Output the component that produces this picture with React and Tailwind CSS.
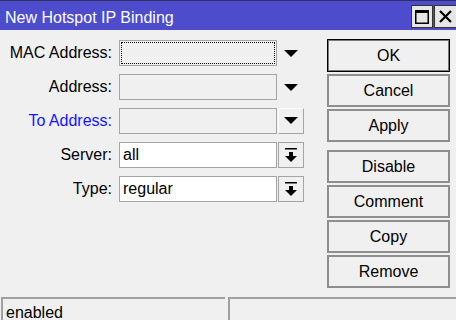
const FIELDS = [
  { label: "MAC Address:", value: "", kind: "plain", focus: true },
  { label: "Address:", value: "", kind: "plain" },
  { label: "To Address:", value: "", kind: "boxed", blue: true },
  { label: "Server:", value: "all", kind: "select", white: true },
  { label: "Type:", value: "regular", kind: "select", white: true },
];

const Arrow = () => (
  <svg width="14" height="8" viewBox="0 0 14 8">
    <path d="M0 0h14L7 7z" fill="#000" />
  </svg>
);

const SelectArrow = () => (
  <svg width="12" height="14" viewBox="0 0 12 14">
    <rect x="0" y="0" width="12" height="1.5" fill="#000" />
    <rect x="4" y="4" width="4" height="4" fill="#000" />
    <path d="M0 8h12L6 14z" fill="#000" />
  </svg>
);

const Field = ({ f }) => (
  <div className="flex items-center h-[26px]">
    <span
      className={`w-[111px] text-right mr-[7px] whitespace-nowrap ${
        f.blue ? "text-[#1515ff]" : "text-black"
      }`}
    >
      {f.label}
    </span>
    <div
      className={`relative w-[158px] h-[26px] border border-[#a5a5a5] flex items-center pl-[3px] ${
        f.white ? "bg-white" : "bg-[#f0f0f0]"
      }`}
    >
      {f.focus && (
        <div className="absolute inset-[1px] border border-dotted border-black"></div>
      )}
      {f.value}
    </div>
    {f.kind === "plain" && (
      <div className="w-[26px] ml-[1px] h-[26px] flex items-center justify-center pt-[1px]">
        <Arrow />
      </div>
    )}
    {f.kind === "boxed" && (
      <div className="w-[26px] ml-[1px] h-[26px] border border-[#a5a5a5] border-t-white border-l-white flex items-center justify-center">
        <Arrow />
      </div>
    )}
    {f.kind === "select" && (
      <div className="w-[26px] ml-[1px] h-[26px] border border-[#a5a5a5] bg-[#f0f0f0] flex items-center justify-center">
        <SelectArrow />
      </div>
    )}
  </div>
);

const Btn = ({ children, primary }) => (
  <button
    className={`w-[123px] h-[33px] bg-[#f0f0f0] text-black text-[16px] ${
      primary
        ? "border border-black shadow-[inset_0_0_0_1px_#7a7a7a]"
        : "border-2 border-[#8e8e8e]"
    }`}
  >
    {children}
  </button>
);

const App = () => {
  return (
    <div className="w-[456px] h-[320px] bg-[#f0f0f0] flex flex-col overflow-hidden font-['Liberation_Sans',Arial,sans-serif] text-[16px] text-black">
      {/* title bar */}
      <div className="h-[30px] border-t border-[#2e2e5e] bg-[#4c4ccc] flex items-center justify-between pl-[5px]">
        <span className="text-white text-[16px] pt-[5px]">New Hotspot IP Binding</span>
        <div className="flex gap-[1px] pt-[2px]">
          <div className="w-[22px] h-[23px] border border-[#333] bg-[#e6e6e6] flex items-center justify-center">
            <svg width="14" height="14" viewBox="0 0 14 14">
              <rect x="0.75" y="0.75" width="12.5" height="12.5" fill="none" stroke="#000" strokeWidth="1.5" />
              <rect x="0" y="0" width="14" height="3" fill="#000" />
            </svg>
          </div>
          <div className="w-[22px] h-[23px] border border-[#333] border-r-0 bg-[#e6e6e6] flex items-center justify-center">
            <svg width="13" height="13" viewBox="0 0 13 13">
              <path d="M1 1l11 11M12 1L1 12" stroke="#000" strokeWidth="2.2" />
            </svg>
          </div>
        </div>
      </div>

      {/* body */}
      <div className="flex-1 flex">
        <div className="flex flex-col gap-[8px] pt-[10px] pl-[1px]">
          {FIELDS.map((f) => (
            <Field key={f.label} f={f} />
          ))}
        </div>
        <div className="flex flex-col pt-[9px] ml-[23px]">
          <div className="flex flex-col gap-[2px]">
            <Btn primary>OK</Btn>
            <Btn>Cancel</Btn>
            <Btn>Apply</Btn>
          </div>
          <div className="flex flex-col gap-[2px] mt-[8px]">
            <Btn>Disable</Btn>
            <Btn>Comment</Btn>
            <Btn>Copy</Btn>
            <Btn>Remove</Btn>
          </div>
        </div>
      </div>

      {/* status bar */}
      <div className="h-[23px] flex gap-[3px] pl-[1px]">
        <div className="w-[224px] border-t-2 border-l-2 border-[#a0a0a0] pl-[3px] pt-[4px] leading-[20px]">
          enabled
        </div>
        <div className="flex-1 border-t-2 border-l-2 border-[#a0a0a0]"></div>
      </div>
    </div>
  );
};

export default App;
